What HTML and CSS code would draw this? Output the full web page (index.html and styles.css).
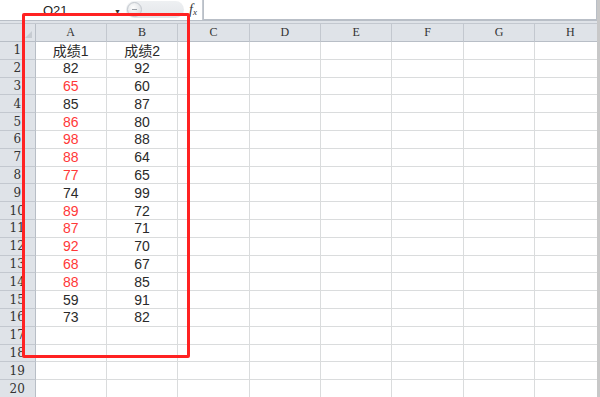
FILE: index.html
```html
<!DOCTYPE html>
<html lang="zh-CN">
<head>
    <meta charset="UTF-8">
    <title>成绩表</title>
    <link rel="stylesheet" href="styles.css">
</head>
<body>
    <div class="app">
        <div class="formula-bar">
            <div class="name-box">
                <span class="cell-ref">O21</span>
                <span class="arrow">▼</span>
            </div>
            <div class="fx-area">
                <span class="capsule"><span class="knob"><span class="dash"></span></span></span>
                <span class="fx">f<sub>x</sub></span>
            </div>
            <div class="formula-input"></div>
        </div>
        <div class="band"></div>

        <div class="sheet" id="sheet">
            <!-- cells are built by the script below -->
        </div>

        <div class="highlight"></div>
        <div class="scrollbar"></div>
    </div>

    <script>
        const columns = ['A', 'B', 'C', 'D', 'E', 'F', 'G', 'H'];

        // [score1, score2, score1 is red]
        const scores = [
            [82, 92, false],
            [65, 60, true],
            [85, 87, false],
            [86, 80, true],
            [98, 88, true],
            [88, 64, true],
            [77, 65, true],
            [74, 99, false],
            [89, 72, true],
            [87, 71, true],
            [92, 70, true],
            [68, 67, true],
            [88, 85, true],
            [59, 91, false],
            [73, 82, false]
        ];

        function cell(cls, text) {
            const div = document.createElement('div');
            div.className = cls;
            div.textContent = text || '';
            return div;
        }

        function renderSheet() {
            const sheet = document.getElementById('sheet');

            const corner = cell('corner');
            corner.appendChild(cell('corner-mark'));
            sheet.appendChild(corner);
            columns.forEach(col => sheet.appendChild(cell('col-head', col)));

            for (let r = 1; r <= 20; r++) {
                sheet.appendChild(cell('row-head', r));
                columns.forEach((col, i) => {
                    let text = '';
                    let cls = 'cell';
                    if (r === 1 && i === 0) text = '成绩1';
                    if (r === 1 && i === 1) text = '成绩2';
                    const row = scores[r - 2];
                    if (row && i === 0) {
                        text = row[0];
                        if (row[2]) cls += ' red';
                    }
                    if (row && i === 1) text = row[1];
                    sheet.appendChild(cell(cls, text));
                });
            }
        }

        renderSheet();
    </script>
</body>
</html>
```

FILE: styles.css
```css
body {
    margin: 0;
    background: #fff;
    font-family: "Liberation Sans", Arial, "Noto Sans CJK SC", sans-serif;
}

.app {
    position: relative;
    width: 600px;
    height: 397px;
    overflow: hidden;
}

.formula-bar {
    display: flex;
    height: 20px;
    background: #fff;
}

.name-box {
    width: 126px;
    display: flex;
    align-items: center;
}

.cell-ref {
    margin-left: 43px;
    font-size: 13px;
    color: #222;
    flex: 1;
}

.arrow {
    font-size: 7px;
    color: #333;
    margin-right: 5px;
    margin-top: 3px;
}

.fx-area {
    width: 77px;
    display: flex;
    align-items: center;
    box-sizing: border-box;
    border-right: 1px solid #c5cad1;
}

.capsule {
    width: 58px;
    height: 17px;
    margin-top: -2px;
    border-radius: 9px;
    background: linear-gradient(#eef0f2, #e3e6ea);
    display: flex;
    align-items: center;
}

.knob {
    width: 13px;
    height: 13px;
    margin-left: 1px;
    border-radius: 50%;
    background: radial-gradient(circle at 40% 35%, #fdfdfd, #d3d7dc);
    border: 1px solid #c3c8ce;
    display: flex;
    align-items: center;
    justify-content: center;
}

.dash {
    width: 5px;
    height: 1px;
    background: #9aa0a8;
}

.fx {
    margin-left: auto;
    margin-right: 5px;
    font-family: "Liberation Serif", "Times New Roman", serif;
    font-style: italic;
    font-size: 14px;
    color: #333;
}

.fx sub {
    font-size: 9px;
    vertical-align: -1px;
}

.formula-input {
    flex: 1;
    border: 1px solid #b9bfc7;
    border-top: none;
    margin-right: 3px;
}

.band {
    height: 4px;
    background: #dfe3e8;
    border-top: 1px solid #b9bfc7;
    border-bottom: 1px solid #c3c8cf;
    box-sizing: border-box;
}

.sheet {
    display: grid;
    grid-template-columns: 35.5px repeat(8, 71.4px);
    grid-template-rows: 18px repeat(20, 17.8px);
    font-size: 14px;
}

.corner,
.col-head,
.row-head {
    background: #dfe3e8;
    color: #333;
    font-family: "DejaVu Serif", "Liberation Serif", serif;
    font-size: 12px;
    display: flex;
    align-items: center;
    justify-content: center;
    box-sizing: border-box;
}

.corner {
    position: relative;
    border-right: 1px solid #b8bec6;
    border-bottom: 1px solid #b8bec6;
}

.corner-mark {
    position: absolute;
    right: 3px;
    bottom: 3px;
    width: 0;
    height: 0;
    border-left: 7px solid transparent;
    border-bottom: 7px solid #c6cbd1;
}

.col-head {
    border-right: 1px solid #c3c8cf;
    border-bottom: 1px solid #b8bec6;
    font-family: "Liberation Serif", serif;
}

.row-head {
    border-right: 1px solid #b8bec6;
    border-bottom: 1px solid #c3c8cf;
}

.cell {
    display: flex;
    align-items: center;
    justify-content: center;
    border-right: 1px solid #dadcdd;
    border-bottom: 1px solid #dadcdd;
    box-sizing: border-box;
    color: #2a2a2a;
}

.cell.red {
    color: #ff3838;
}

.highlight {
    position: absolute;
    left: 22px;
    top: 13px;
    width: 168px;
    height: 345px;
    border: 3px solid #ff2222;
    border-radius: 2px;
    box-sizing: border-box;
}

.scrollbar {
    position: absolute;
    right: 0;
    top: 0;
    width: 3px;
    height: 397px;
    background: #c8c8c8;
}
```
